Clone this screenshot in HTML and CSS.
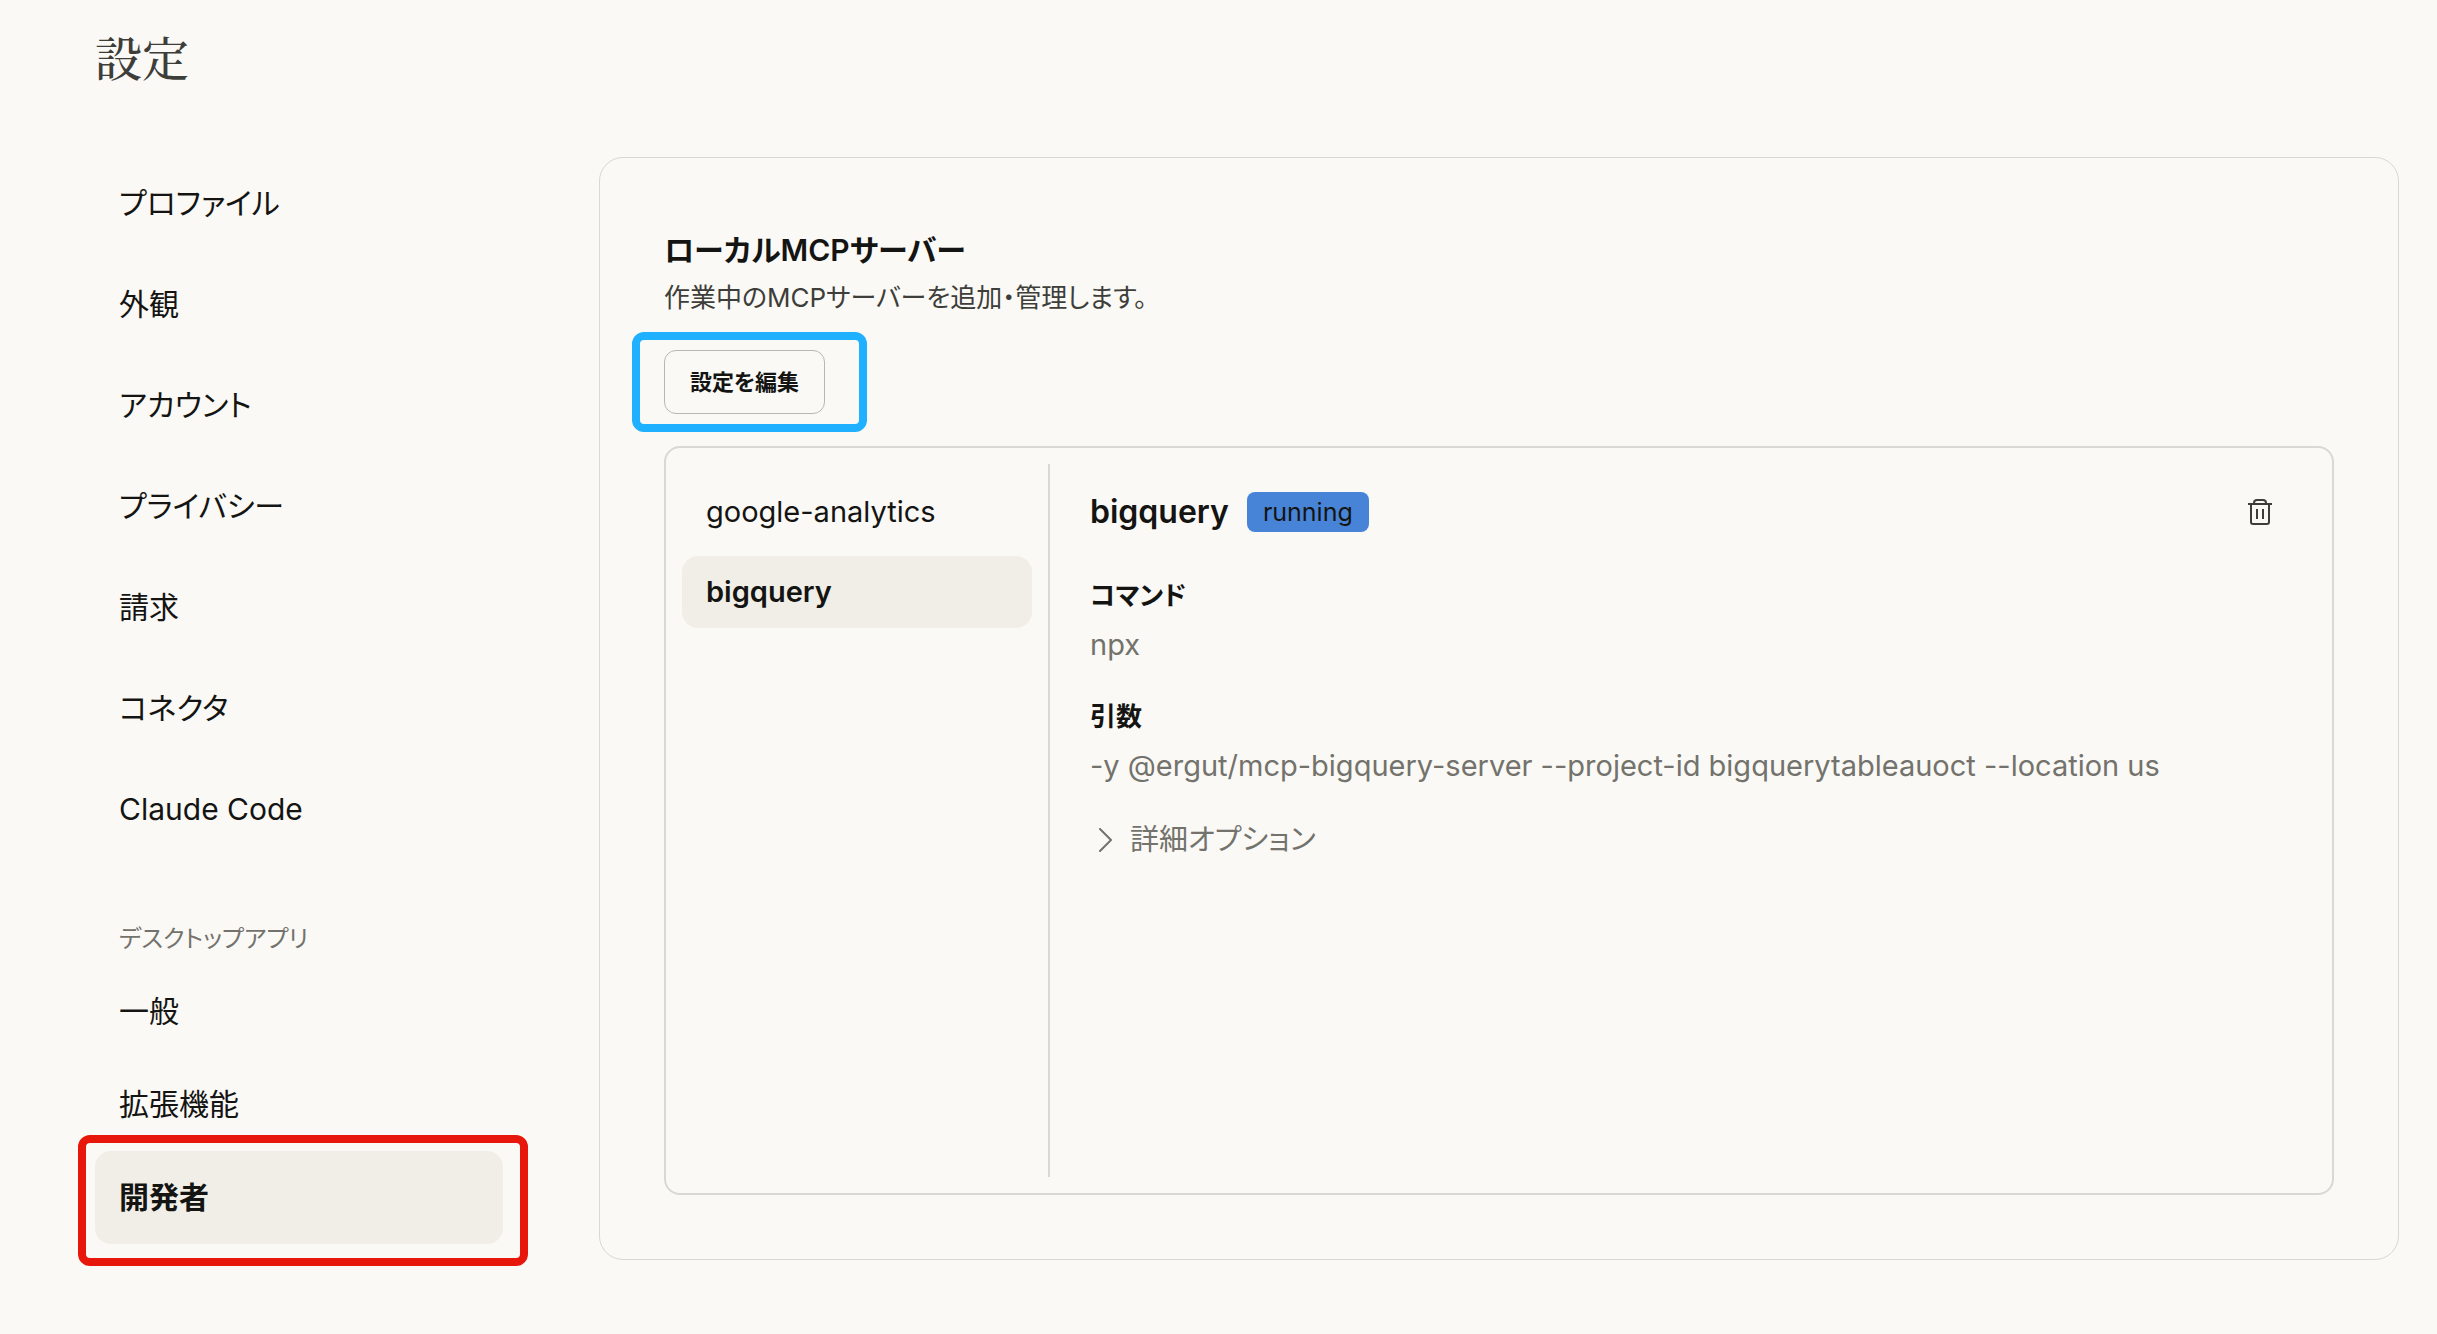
FILE: index.html
```
<!DOCTYPE html>
<html lang="ja">
<head>
  <meta charset="UTF-8">
  <meta name="viewport" content="width=device-width, initial-scale=1.0">
  <title>設定</title>
  <link rel="stylesheet" href="styles.css">
</head>
<body>
  <div class="page">
    <h1 class="page-title">設定</h1>

    <div class="layout">
      <nav class="sidebar">
        <ul class="nav-list">
          <li><a class="nav-item" href="#profile">プロファイル</a></li>
          <li><a class="nav-item" href="#appearance">外観</a></li>
          <li><a class="nav-item" href="#account">アカウント</a></li>
          <li><a class="nav-item" href="#privacy">プライバシー</a></li>
          <li><a class="nav-item" href="#billing">請求</a></li>
          <li><a class="nav-item" href="#connectors">コネクタ</a></li>
          <li><a class="nav-item" href="#claude-code">Claude Code</a></li>
        </ul>

        <h2 class="nav-label">デスクトップアプリ</h2>
        <ul class="nav-list compact">
          <li><a class="nav-item" href="#general">一般</a></li>
          <li><a class="nav-item" href="#extensions">拡張機能</a></li>
          <li class="mark mark-red"><a class="nav-item active" href="#developer">開発者</a></li>
        </ul>
      </nav>

      <main class="card">
        <h2 class="card-title">ローカルMCPサーバー</h2>
        <p class="card-text">作業中のMCPサーバーを追加・管理します。</p>
        <div class="mark mark-blue">
          <button class="edit-button" type="button">設定を編集</button>
        </div>

        <div class="servers">
          <div class="server-list">
            <button class="server" type="button">google-analytics</button>
            <button class="server active" type="button">bigquery</button>
          </div>

          <section class="detail">
            <header class="detail-header">
              <h3 class="detail-title">bigquery</h3>
              <span class="badge">running</span>
              <button class="delete-button" type="button" aria-label="削除">
                <svg width="24" height="26" viewBox="0 0 24 26" fill="none" stroke="currentColor" stroke-width="2">
                  <path d="M0 5h24"/>
                  <path d="M6 5V4a3 3 0 0 1 3-3h6a3 3 0 0 1 3 3v1"/>
                  <path d="M3 5v18a2 2 0 0 0 2 2h14a2 2 0 0 0 2-2V5"/>
                  <path d="M9 10v10M15 10v10"/>
                </svg>
              </button>
            </header>

            <dl class="fields">
              <div class="field">
                <dt>コマンド</dt>
                <dd>npx</dd>
              </div>
              <div class="field">
                <dt>引数</dt>
                <dd>-y @ergut/mcp-bigquery-server --project-id bigquerytableauoct --location us</dd>
              </div>
            </dl>

            <button class="more-button" type="button">
              <svg width="14" height="24" viewBox="0 0 14 24" fill="none" stroke="currentColor" stroke-width="2" stroke-linecap="round" stroke-linejoin="round">
                <path d="M2 1l11 11L2 23"/>
              </svg>
              詳細オプション
            </button>
          </section>
        </div>
      </main>
    </div>
  </div>
</body>
</html>
```

FILE: styles.css
```
* {
  box-sizing: border-box;
}
body {
  margin: 0;
  background: #faf9f5;
  color: #141413;
  font-family: Inter, "Noto Sans CJK JP", sans-serif;
  font-size: 29px;
  line-height: 40px;
  font-feature-settings: "palt";
}
h1, h2, h3, p, ul, dl, dd {
  margin: 0;
  padding: 0;
}
button {
  font: inherit;
  font-feature-settings: inherit;
  color: inherit;
  background: none;
  border: none;
  padding: 0;
  cursor: pointer;
}
svg {
  display: block;
}
.page {
  display: flex;
  flex-direction: column;
  min-height: 100vh;
  padding: 22px 38px 74px 95px;
}
.page-title {
  font-family: "Noto Serif CJK JP", "Noto Sans CJK JP", serif;
  font-size: 47px;
  font-weight: 500;
  line-height: 68px;
  color: #3d3d3a;
  margin-bottom: 67px;
}
.layout {
  flex: 1;
  display: grid;
  grid-template-columns: 408px 1fr;
  gap: 96px;
}

/* Sidebar */
.nav-list {
  display: flex;
  flex-direction: column;
  gap: 8px;
  list-style: none;
}
.nav-list.compact {
  gap: 0;
}
.nav-item {
  display: flex;
  align-items: center;
  height: 93px;
  padding: 0 24px 2px;
  border-radius: 16px;
  font-size: 30px;
  color: #141413;
  text-decoration: none;
}
.nav-item.active {
  background: #f0eee6;
  font-weight: 700;
}
.nav-label {
  padding: 0 24px;
  margin: 63px 0 6px;
  font-size: 24px;
  font-weight: 400;
  color: #73726c;
}

/* Highlight frames */
.mark {
  position: relative;
}
.mark::after {
  content: "";
  position: absolute;
  border: 8px solid;
  border-radius: 12px;
  pointer-events: none;
}
.mark-red::after {
  inset: -16px -25px -22px -17px;
  border-color: #e8170b;
}
.mark-blue {
  align-self: flex-start;
}
.mark-blue::after {
  inset: -18px -42px -18px -32px;
  border-color: #1fb0ff;
}

/* Card */
.card {
  display: flex;
  flex-direction: column;
  min-width: 0;
  padding: 64px;
  border: 1px solid #d9d8d3;
  border-radius: 24px;
}
.card-title {
  font-size: 30px;
  font-weight: 600;
  line-height: 56px;
}
.card-text {
  font-size: 26px;
  color: #3d3d3a;
  margin-bottom: 32px;
}
.edit-button {
  display: block;
  height: 64px;
  padding: 0 25px;
  border: 1px solid #b8b7b0;
  border-radius: 12px;
  font-size: 22px;
  font-weight: 700;
}

/* Servers */
.servers {
  flex: 1;
  display: flex;
  margin-top: 32px;
  padding: 16px;
  border: 2px solid #d9d8d3;
  border-radius: 16px;
}
.server-list {
  display: flex;
  flex-direction: column;
  gap: 8px;
  width: 368px;
  padding: 12px 16px 0 0;
  border-right: 2px solid #d9d8d3;
}
.server {
  height: 72px;
  padding: 0 24px;
  border-radius: 16px;
  text-align: left;
}
.server.active {
  background: #f0eee6;
  font-weight: 600;
}
.detail {
  flex: 1;
  min-width: 0;
  padding: 28px 44px 0 40px;
}
.detail-header {
  display: flex;
  align-items: center;
  gap: 18px;
  margin-bottom: 44px;
}
.detail-title {
  font-size: 32px;
  font-weight: 600;
}
.badge {
  padding: 0 16px;
  border-radius: 8px;
  background: #4784d7;
  font-size: 25px;
}
.delete-button {
  margin-left: auto;
  color: #3d3d3a;
}
.fields {
  display: flex;
  flex-direction: column;
  gap: 32px;
}
.field dt {
  font-size: 26px;
  font-weight: 600;
  margin-bottom: 9px;
}
.field dd {
  color: #73726c;
}
.more-button {
  display: flex;
  align-items: center;
  gap: 18px;
  margin-top: 34px;
  padding-left: 8px;
  color: #73726c;
}
```
